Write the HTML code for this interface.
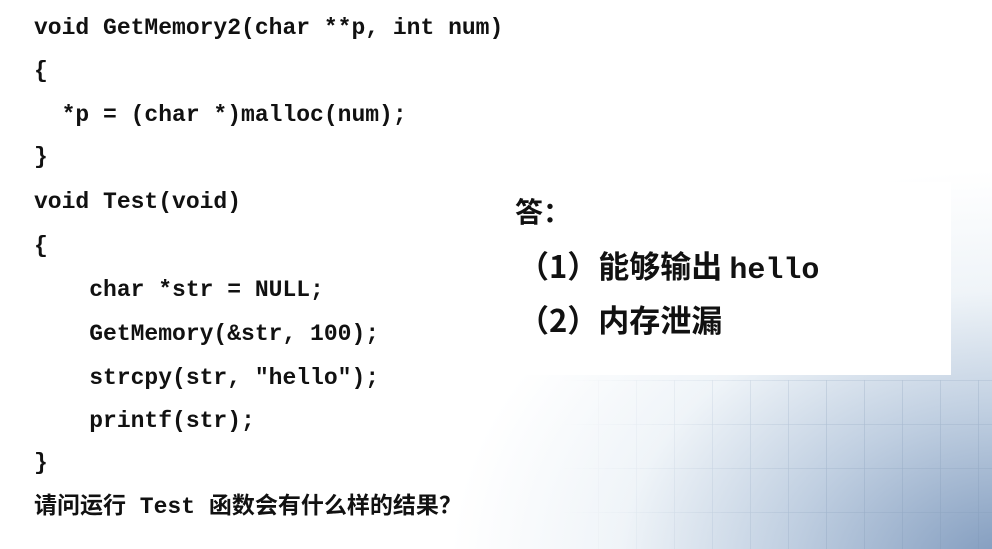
<!DOCTYPE html>
<html><head><meta charset="utf-8"><style>
html,body{margin:0;padding:0}
body{width:992px;height:549px;position:relative;overflow:hidden;background:#fff;
font-family:"Liberation Mono","Noto Sans CJK SC",monospace;}
.bg{position:absolute;left:0;top:0;width:992px;height:549px;
background:
radial-gradient(ellipse 560px 400px at 1010px 570px, rgba(110,140,180,0.9) 0%, rgba(150,175,205,0.6) 40%, rgba(210,224,236,0.35) 70%, rgba(255,255,255,0) 100%);}
.grid{position:absolute;left:560px;top:380px;width:432px;height:169px;opacity:.35;
background-image:linear-gradient(90deg,rgba(120,145,175,.6) 1px,transparent 1px),linear-gradient(rgba(120,145,175,.5) 1px,transparent 1px);
background-size:38px 44px;
-webkit-mask-image:linear-gradient(90deg,transparent,#000 60%);}
.box{position:absolute;left:500px;top:182px;width:451px;height:193px;background:#fff;}
.code{position:absolute;left:34px;top:0;font-size:23px;font-weight:bold;color:#111;white-space:pre;}
.code div{position:absolute;left:0;height:44px;line-height:44px;}
.ans{position:absolute;font-family:"Noto Sans CJK SC","Liberation Sans",sans-serif;font-weight:bold;color:#111;white-space:pre;}
</style></head><body>
<div class="bg"></div>
<div class="grid"></div>
<div class="box"></div>
<div class="code">
<div style="top:6px">void GetMemory2(char **p, int num)</div>
<div style="top:49px">{</div>
<div style="top:93px">  *p = (char *)malloc(num);</div>
<div style="top:135px">}</div>
<div style="top:180px">void Test(void)</div>
<div style="top:224px">{</div>
<div style="top:268px">    char *str = NULL;</div>
<div style="top:312px">    GetMemory(&amp;str, 100);</div>
<div style="top:356px">    strcpy(str, "hello");</div>
<div style="top:399px">    printf(str);</div>
<div style="top:441px">}</div>
<div style="top:485px;font-size:23px">请问运行 Test 函数会有什么样的结果？</div>
</div>
<div class="ans" style="left:515px;top:192px;font-size:28px;line-height:38px">答：</div>
<div class="ans" style="left:518px;top:245px;font-size:31px;line-height:40px">（1）能够输出 <span style="font-family:'Liberation Mono',monospace;font-size:30px">hello</span></div>
<div class="ans" style="left:518px;top:299px;font-size:31px;line-height:40px">（2）内存泄漏</div>
</body></html>
